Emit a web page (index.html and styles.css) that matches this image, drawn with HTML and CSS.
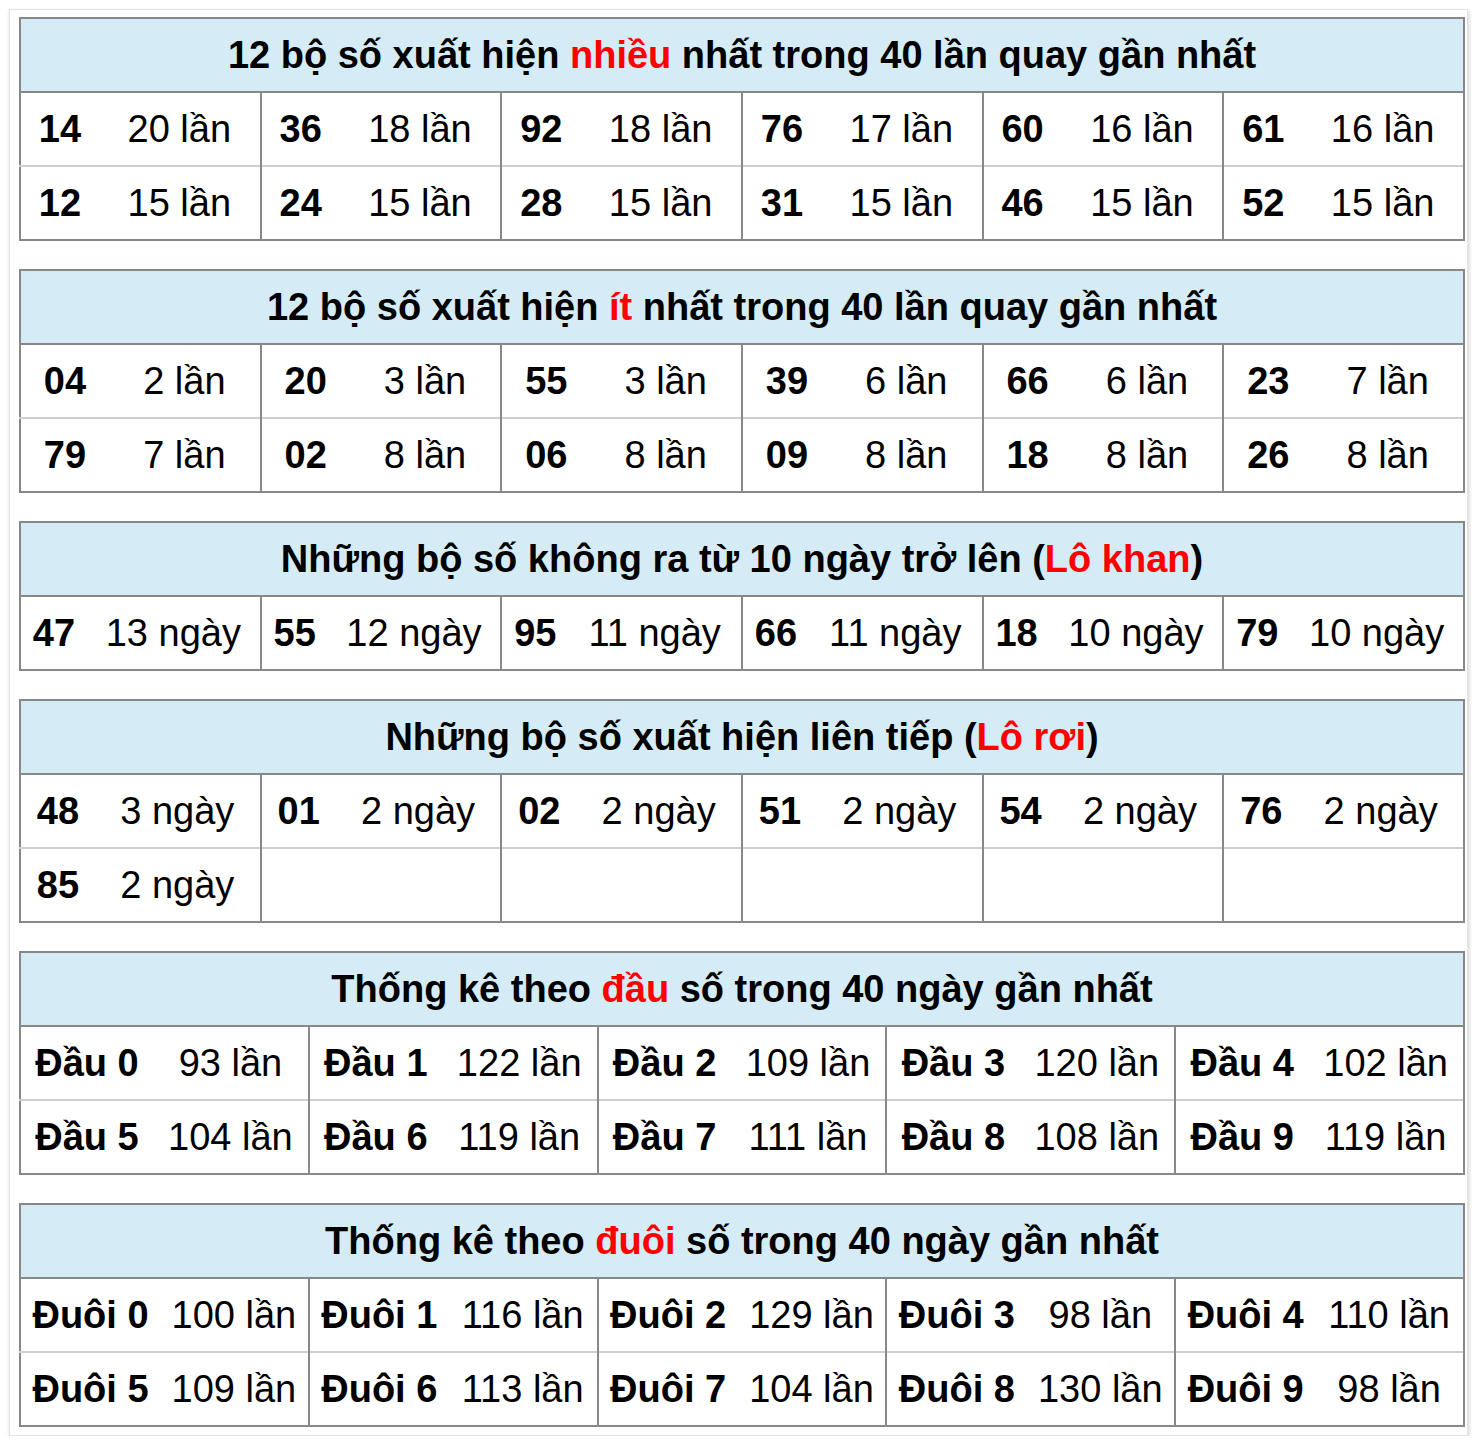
FILE: index.html
```html
<!DOCTYPE html>
<html lang="vi">
<head>
<meta charset="utf-8">
<title>Thống kê lô tô</title>
<link rel="stylesheet" href="styles.css">
</head>
<body>
<div class="box">

<table class="stat t1">
  <colgroup>
    <col class="cn"><col><col class="cn"><col><col class="cn"><col><col class="cn"><col><col class="cn"><col><col class="cn"><col>
  </colgroup>
  <tr><th colspan="12">12 bộ số xuất hiện <span class="hl">nhiều</span> nhất trong 40 lần quay gần nhất</th></tr>
  <tr>
    <td class="n">14</td><td class="c">20 lần</td>
    <td class="n">36</td><td class="c">18 lần</td>
    <td class="n">92</td><td class="c">18 lần</td>
    <td class="n">76</td><td class="c">17 lần</td>
    <td class="n">60</td><td class="c">16 lần</td>
    <td class="n">61</td><td class="c">16 lần</td>
  </tr>
  <tr>
    <td class="n">12</td><td class="c">15 lần</td>
    <td class="n">24</td><td class="c">15 lần</td>
    <td class="n">28</td><td class="c">15 lần</td>
    <td class="n">31</td><td class="c">15 lần</td>
    <td class="n">46</td><td class="c">15 lần</td>
    <td class="n">52</td><td class="c">15 lần</td>
  </tr>
</table>

<table class="stat t2">
  <colgroup>
    <col class="cn"><col><col class="cn"><col><col class="cn"><col><col class="cn"><col><col class="cn"><col><col class="cn"><col>
  </colgroup>
  <tr><th colspan="12">12 bộ số xuất hiện <span class="hl">ít</span> nhất trong 40 lần quay gần nhất</th></tr>
  <tr>
    <td class="n">04</td><td class="c">2 lần</td>
    <td class="n">20</td><td class="c">3 lần</td>
    <td class="n">55</td><td class="c">3 lần</td>
    <td class="n">39</td><td class="c">6 lần</td>
    <td class="n">66</td><td class="c">6 lần</td>
    <td class="n">23</td><td class="c">7 lần</td>
  </tr>
  <tr>
    <td class="n">79</td><td class="c">7 lần</td>
    <td class="n">02</td><td class="c">8 lần</td>
    <td class="n">06</td><td class="c">8 lần</td>
    <td class="n">09</td><td class="c">8 lần</td>
    <td class="n">18</td><td class="c">8 lần</td>
    <td class="n">26</td><td class="c">8 lần</td>
  </tr>
</table>

<table class="stat t3">
  <colgroup>
    <col class="cn"><col><col class="cn"><col><col class="cn"><col><col class="cn"><col><col class="cn"><col><col class="cn"><col>
  </colgroup>
  <tr><th colspan="12">Những bộ số không ra từ 10 ngày trở lên (<span class="hl">Lô khan</span>)</th></tr>
  <tr>
    <td class="n">47</td><td class="c">13 ngày</td>
    <td class="n">55</td><td class="c">12 ngày</td>
    <td class="n">95</td><td class="c">11 ngày</td>
    <td class="n">66</td><td class="c">11 ngày</td>
    <td class="n">18</td><td class="c">10 ngày</td>
    <td class="n">79</td><td class="c">10 ngày</td>
  </tr>
</table>

<table class="stat t4">
  <colgroup>
    <col class="cn"><col><col class="cn"><col><col class="cn"><col><col class="cn"><col><col class="cn"><col><col class="cn"><col>
  </colgroup>
  <tr><th colspan="12">Những bộ số xuất hiện liên tiếp (<span class="hl">Lô rơi</span>)</th></tr>
  <tr>
    <td class="n">48</td><td class="c">3 ngày</td>
    <td class="n">01</td><td class="c">2 ngày</td>
    <td class="n">02</td><td class="c">2 ngày</td>
    <td class="n">51</td><td class="c">2 ngày</td>
    <td class="n">54</td><td class="c">2 ngày</td>
    <td class="n">76</td><td class="c">2 ngày</td>
  </tr>
  <tr>
    <td class="n">85</td><td class="c">2 ngày</td>
    <td class="n"></td><td class="c"></td>
    <td class="n"></td><td class="c"></td>
    <td class="n"></td><td class="c"></td>
    <td class="n"></td><td class="c"></td>
    <td class="n"></td><td class="c"></td>
  </tr>
</table>

<table class="stat t5">
  <colgroup>
    <col class="cn"><col><col class="cn"><col><col class="cn"><col><col class="cn"><col><col class="cn"><col>
  </colgroup>
  <tr><th colspan="10">Thống kê theo <span class="hl">đầu</span> số trong 40 ngày gần nhất</th></tr>
  <tr>
    <td class="n">Đầu 0</td><td class="c">93 lần</td>
    <td class="n">Đầu 1</td><td class="c">122 lần</td>
    <td class="n">Đầu 2</td><td class="c">109 lần</td>
    <td class="n">Đầu 3</td><td class="c">120 lần</td>
    <td class="n">Đầu 4</td><td class="c">102 lần</td>
  </tr>
  <tr>
    <td class="n">Đầu 5</td><td class="c">104 lần</td>
    <td class="n">Đầu 6</td><td class="c">119 lần</td>
    <td class="n">Đầu 7</td><td class="c">111 lần</td>
    <td class="n">Đầu 8</td><td class="c">108 lần</td>
    <td class="n">Đầu 9</td><td class="c">119 lần</td>
  </tr>
</table>

<table class="stat t6">
  <colgroup>
    <col class="cn"><col><col class="cn"><col><col class="cn"><col><col class="cn"><col><col class="cn"><col>
  </colgroup>
  <tr><th colspan="10">Thống kê theo <span class="hl">đuôi</span> số trong 40 ngày gần nhất</th></tr>
  <tr>
    <td class="n">Đuôi 0</td><td class="c">100 lần</td>
    <td class="n">Đuôi 1</td><td class="c">116 lần</td>
    <td class="n">Đuôi 2</td><td class="c">129 lần</td>
    <td class="n">Đuôi 3</td><td class="c">98 lần</td>
    <td class="n">Đuôi 4</td><td class="c">110 lần</td>
  </tr>
  <tr>
    <td class="n">Đuôi 5</td><td class="c">109 lần</td>
    <td class="n">Đuôi 6</td><td class="c">113 lần</td>
    <td class="n">Đuôi 7</td><td class="c">104 lần</td>
    <td class="n">Đuôi 8</td><td class="c">130 lần</td>
    <td class="n">Đuôi 9</td><td class="c">98 lần</td>
  </tr>
</table>

</div>
</body>
</html>
```

FILE: styles.css
```css
html, body {
  margin: 0;
  padding: 0;
  background: #ffffff;
}

body {
  font-family: "Liberation Sans", Arial, Helvetica, sans-serif;
  color: #000;
}

.box {
  box-sizing: border-box;
  width: 1459px;
  margin: 9px 0 0 9px;
  padding: 7px 2px 8px 9px;
  border: 1px solid #e2e2e2;
  box-shadow: 1px 2px 4px rgba(0, 0, 0, 0.18);
  background: #fff;
}

.stat {
  width: 1446px;
  table-layout: fixed;
  border-collapse: collapse;
  border: 2px solid #888;
  margin: 0 0 28px 0;
  font-size: 38px;
}

.stat:last-child {
  margin-bottom: 0;
}

.stat th {
  height: 72px;
  padding: 0;
  background: #d5ecf6;
  font-weight: bold;
  text-align: center;
  vertical-align: middle;
  border-bottom: 2px solid #888;
  white-space: nowrap;
}

.stat td {
  height: 72px;
  padding: 0;
  text-align: center;
  vertical-align: middle;
  white-space: nowrap;
}

.stat tr + tr + tr td {
  border-top: 2px solid #cfcfcf;
}

.stat td.n {
  font-weight: bold;
}

.stat td.c {
  border-right: 2px solid #888;
}

.hl {
  color: #ff0000;
}

.t1 .cn { width: 79px; }
.t2 .cn { width: 89px; }
.t3 .cn { width: 67px; }
.t4 .cn { width: 75px; }
.t5 .cn { width: 133px; }
.t6 .cn { width: 140px; }
```
